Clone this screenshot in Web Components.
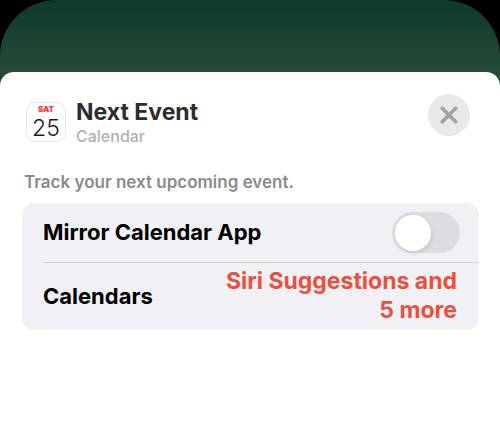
<!DOCTYPE html>
<html lang="en">

<head>
    <meta charset="utf-8">
    <meta name="viewport" content="width=device-width, initial-scale=1">
    <title>Next Event</title>
    <style>
    html {
        min-height: 100%;
        background: #000;
    }

    body {
        margin: 0;
        font-family: Inter, "Liberation Sans", sans-serif;
    }
    </style>
</head>

<body>
    <widget-sheet>
        <sheet-header>
            <calendar-icon slot="icon">
                <span slot="weekday">SAT</span>
                <span slot="day">25</span>
            </calendar-icon>
            <span slot="title">Next Event</span>
            <span slot="subtitle">Calendar</span>
        </sheet-header>
        <settings-group>
            <span slot="description">Track your next upcoming event.</span>
            <toggle-row>Mirror Calendar App</toggle-row>
            <value-row>
                Calendars
                <span slot="value">Siri Suggestions and 5 more</span>
            </value-row>
        </settings-group>
    </widget-sheet>

    <template id="widget-sheet-template">
        <style>
        :host {
            display: flex;
            flex-direction: column;
            box-sizing: border-box;
            min-height: 100vh;
            padding-top: 72px;
            border-radius: 56px 56px 0 0;
            background: linear-gradient(#10392c, #264a36 72px);
        }

        main {
            flex: 1;
            padding: 22px 21px 22px 22px;
            border-radius: 14px 14px 0 0;
            background: #fff;
        }
        </style>
        <main><slot></slot></main>
    </template>

    <template id="sheet-header-template">
        <style>
        :host {
            display: block;
        }

        header {
            display: flex;
            align-items: flex-start;
            padding: 0 9px 0 4px;
        }

        slot[name="icon"] {
            display: block;
            padding-top: 8px;
        }

        .titles {
            flex: 1;
            padding: 4px 0 0 10px;
        }

        h1, p {
            margin: 0;
        }

        h1 {
            font-size: 23px;
            line-height: 28px;
            font-weight: 700;
            color: #2c2c2e;
        }

        p {
            font-size: 16px;
            line-height: 20px;
            font-weight: 500;
            color: #b0b0b2;
        }

        button {
            display: grid;
            place-items: center;
            width: 42px;
            height: 42px;
            padding: 0;
            border: 0;
            border-radius: 50%;
            background: #e9e9ea;
            color: #a3a3a5;
        }
        </style>
        <header>
            <slot name="icon"></slot>
            <div class="titles">
                <h1><slot name="title"></slot></h1>
                <p><slot name="subtitle"></slot></p>
            </div>
            <button type="button" aria-label="Close">
                <svg width="18" height="18" viewBox="0 0 18 18" fill="none" stroke="currentColor" stroke-width="3.7" stroke-linecap="round">
                    <path d="M2.3 2.3 15.7 15.7M15.7 2.3 2.3 15.7"/>
                </svg>
            </button>
        </header>
    </template>

    <template id="calendar-icon-template">
        <style>
        :host {
            display: flex;
            flex-direction: column;
            align-items: center;
            box-sizing: border-box;
            width: 40px;
            height: 40px;
            padding-top: 2px;
            border: 1px solid #e6e6e7;
            border-radius: 9px;
            background: #fff;
        }

        .weekday {
            font-size: 8px;
            line-height: 9px;
            font-weight: 900;
            color: #f4403d;
        }

        .day {
            font-size: 23px;
            line-height: 28px;
            font-weight: 300;
            color: #1c1c1e;
        }
        </style>
        <div class="weekday"><slot name="weekday"></slot></div>
        <div class="day"><slot name="day"></slot></div>
    </template>

    <template id="settings-group-template">
        <style>
        :host {
            display: block;
        }

        p {
            margin: 0;
            padding: 24px 2px 9px;
            font-size: 17px;
            line-height: 24px;
            font-weight: 600;
            color: #8a8a8c;
        }

        .card {
            border-radius: 12px;
            background: #f1f0f5;
        }
        </style>
        <p><slot name="description"></slot></p>
        <div class="card"><slot></slot></div>
    </template>

    <template id="toggle-row-template">
        <style>
        :host {
            display: block;
            padding-left: 21px;
        }

        .row {
            display: flex;
            align-items: center;
            justify-content: space-between;
            min-height: 59px;
            padding-right: 19px;
            border-bottom: 1px solid #d3d2d8;
        }

        label {
            font-size: 22px;
            line-height: 29px;
            font-weight: 700;
            color: #000;
        }

        input {
            appearance: none;
            display: flex;
            align-items: center;
            box-sizing: border-box;
            flex: none;
            width: 68px;
            height: 41px;
            margin: 0;
            padding: 0 3px;
            border-radius: 21px;
            background: #dddce1;
        }

        input::before {
            content: "";
            width: 36px;
            height: 36px;
            border-radius: 50%;
            background: #fff;
            box-shadow: 1px 2px 5px rgba(0, 0, 0, .1);
        }

        input:checked {
            justify-content: flex-end;
            background: #34c759;
        }
        </style>
        <div class="row">
            <label for="toggle"><slot></slot></label>
            <input id="toggle" type="checkbox" role="switch">
        </div>
    </template>

    <template id="value-row-template">
        <style>
        :host {
            display: block;
        }

        button {
            display: flex;
            align-items: center;
            justify-content: space-between;
            width: 100%;
            padding: 4px 22px 5px 21px;
            border: 0;
            background: none;
            font: inherit;
            font-size: 22px;
            line-height: 29px;
            font-weight: 700;
            color: #000;
            text-align: left;
        }

        .value {
            max-width: 58%;
            font-size: 23px;
            text-align: right;
            color: #e8503f;
        }
        </style>
        <button type="button">
            <span><slot></slot></span>
            <span class="value"><slot name="value"></slot></span>
        </button>
    </template>

    <script>
    // every element only clones its own template
    function defineElement(name) {
        customElements.define(name, class extends HTMLElement {
            constructor() {
                super();
                const template = document.getElementById(name + '-template').content;
                this.attachShadow({ mode: 'open' }).appendChild(template.cloneNode(true));
            }
        });
    }

    defineElement('widget-sheet');
    defineElement('sheet-header');
    defineElement('calendar-icon');
    defineElement('settings-group');
    defineElement('toggle-row');
    defineElement('value-row');
    </script>
</body>

</html>
